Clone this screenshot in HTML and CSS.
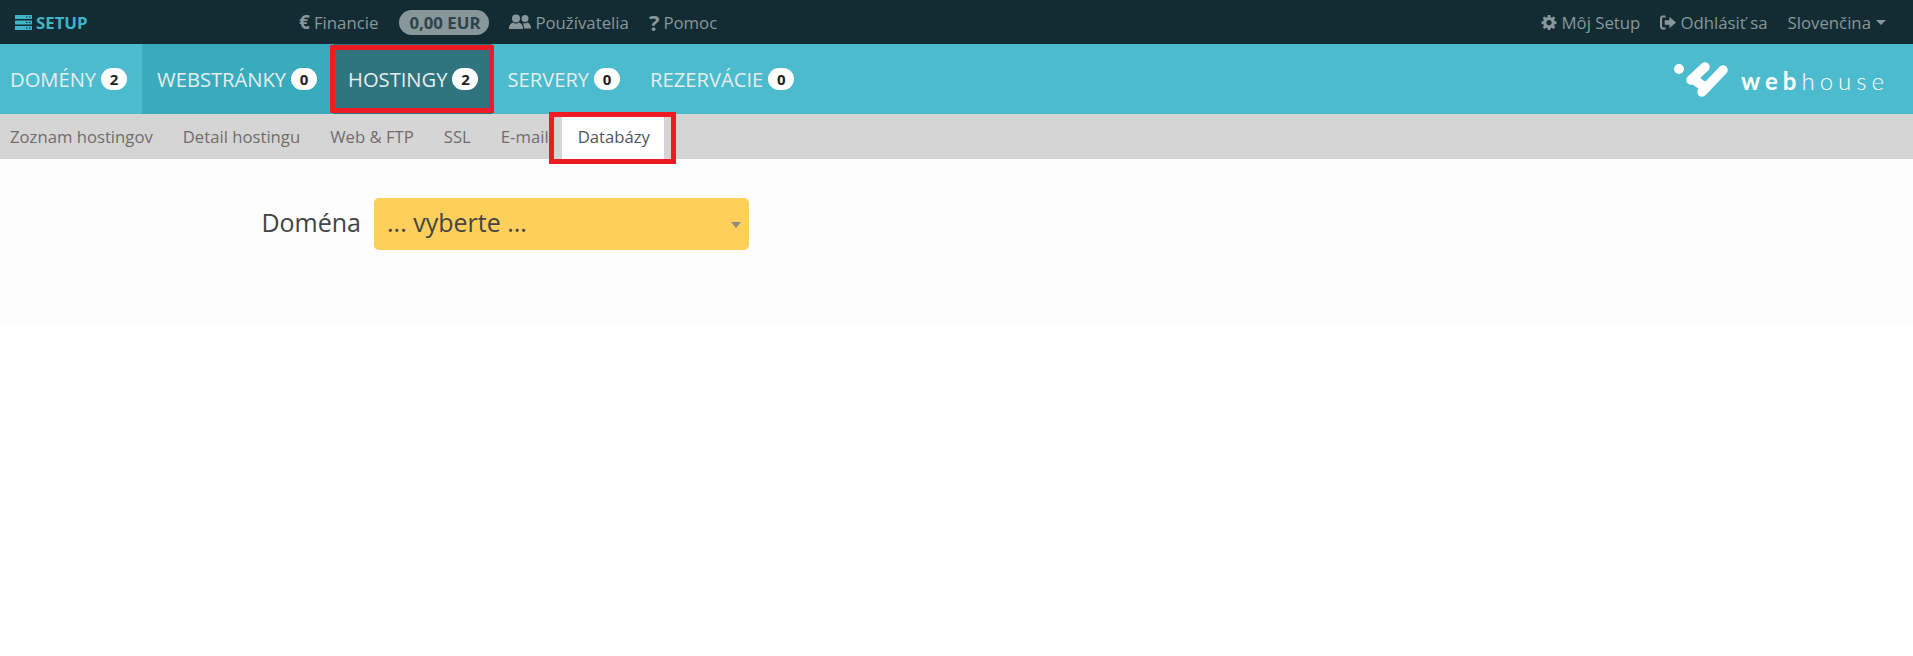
FILE: index.html
```html
<!DOCTYPE html>
<html lang="sk">
<head>
<meta charset="utf-8">
<title>Setup</title>
<link rel="stylesheet" href="styles.css">
</head>
<body>
<header class="topbar">
  <a class="brand">
    <svg class="brand-icon" viewBox="0 0 17 15"><path d="M0 0h17v4H0zM0 5.500h17v4H0zM0 11h17v4H0z" fill="#3fb4c8"/><path d="M11 1.500h1.500v1H11zM14 1.500h1.500v1H14zM11 7h1.500v1H11zM14 7h1.500v1H14zM11 12.500h1.500v1H11zM14 12.500h1.500v1H14z" fill="#132c33"/></svg>
    SETUP
  </a>
  <nav class="topnav">
    <a class="toplink"><span class="glyph">€</span> Financie</a>
    <span class="pill">0,00 EUR</span>
    <a class="toplink"><svg class="icon users" viewBox="0 0 22 16"><circle cx="7" cy="4.500" r="4"/><circle cx="16" cy="4.500" r="3.500"/><path d="M0 15c0-4 2-6 4-6.500 2 1.500 4 1.500 6 0 2 .5 4 2.500 4 6.500z"/><path d="M15 14.500h7c0-3.500-1.500-5.500-3.500-6-1.500 1-3 1-4.500.5 0 0 1 2.500 1 5.500z"/></svg> Používatelia</a>
    <a class="toplink"><span class="glyph big">?</span> Pomoc</a>
  </nav>
  <nav class="topnav right">
    <a class="toplink"><svg class="icon" viewBox="0 0 16 16"><path fill-rule="evenodd" d="M6.700 0h2.600l.4 2.200 1.300.6 1.900-1.300 1.800 1.800-1.300 1.900.6 1.300 2 .4v2.600l-2 .4-.6 1.300 1.300 1.900-1.800 1.800-1.900-1.300-1.300.6-.4 2.200H6.700l-.4-2.200-1.300-.6-1.900 1.300-1.800-1.800 1.300-1.900-.6-1.300-2-.4V6.900l2-.4.6-1.300L1.300 3.300l1.800-1.800L5 2.800l1.300-.6zM8 5.200a2.800 2.800 0 1 0 0 5.600 2.800 2.800 0 0 0 0-5.600z"/></svg> Môj Setup</a>
    <a class="toplink"><svg class="icon" viewBox="0 0 17 15"><path d="M6 0v2.200H3.500c-.8 0-1.300.5-1.300 1.300v8c0 .8.5 1.300 1.300 1.300H6V15H3C1.300 15 0 13.700 0 12V3c0-1.700 1.300-3 3-3z"/><path d="M10 1.500 17 7.500l-7 6V10H5V5h5z"/></svg> Odhlásiť sa</a>
    <a class="toplink lang">Slovenčina <span class="caret"></span></a>
  </nav>
</header>

<nav class="mainnav">
  <a class="tab first">DOMÉNY <span class="badge">2</span></a>
  <a class="tab hover">WEBSTRÁNKY <span class="badge">0</span></a>
  <a class="tab active">HOSTINGY <span class="badge">2</span></a>
  <a class="tab">SERVERY <span class="badge">0</span></a>
  <a class="tab">REZERVÁCIE <span class="badge">0</span></a>
  <div class="logo">
    <svg class="logo-mark" viewBox="0 0 56 42"><circle cx="6" cy="13" r="5" fill="#fff"/><g fill="none" stroke="#fff" stroke-width="9.500" stroke-linecap="round"><path d="M18 24 32 11"/><path d="M20 23 33 32"/><path d="M29 36 50 14"/></g></svg>
    <span class="logo-text"><b>web</b>house</span>
  </div>
</nav>

<nav class="subnav">
  <a class="subtab">Zoznam hostingov</a>
  <a class="subtab">Detail hostingu</a>
  <a class="subtab">Web &amp; FTP</a>
  <a class="subtab">SSL</a>
  <a class="subtab">E-mail</a>
  <a class="subtab current">Databázy</a>
</nav>

<main class="content">
  <form class="field">
    <label class="field-label">Doména</label>
    <div class="select">... vyberte ...<span class="select-caret"></span></div>
  </form>
</main>

<div class="mark mark-hosting"></div>
<div class="mark mark-db"></div>
</body>
</html>
```

FILE: styles.css
```css
* { box-sizing: border-box; }
html, body { margin: 0; padding: 0; }
body {
  background: #fff;
  font-family: "Open Sans", sans-serif;
  color: #444;
  position: relative;
}
a { display: inline-flex; align-items: center; }

.topbar {
  height: 44px;
  background: #132c33;
  display: flex;
  align-items: center;
  padding: 0 27px 0 15px;
  font-size: 16.800px;
  color: #889799;
}
.brand {
  width: 284px;
  font-weight: 700;
  font-size: 16.800px;
  color: #3fb4c8;
  gap: 4px;
}
.brand-icon { width: 17px; height: 15px; }
.topnav { display: flex; align-items: center; gap: 20px; }
.topnav.right { margin-left: auto; }
.toplink { gap: 4px; white-space: nowrap; }
.glyph { font-weight: 700; font-size: 19px; line-height: 1; }
.glyph.big { font-size: 22px; }
.icon { width: 16px; height: 15px; fill: #889799; }
.icon.users { width: 22px; height: 16px; }
.pill {
  background: #889799;
  color: #2f444a;
  font-weight: 700;
  border-radius: 13px;
  height: 25px;
  line-height: 25px;
  padding: 0 10px;
  width: 90px;
  margin-left: 1px;
  white-space: nowrap;
}
.caret {
  width: 0; height: 0;
  border-left: 5px solid transparent;
  border-right: 5px solid transparent;
  border-top: 5px solid #889799;
  margin-left: 1px;
}

.mainnav {
  height: 70px;
  background: #4bbbcd;
  display: flex;
  align-items: stretch;
  padding-right: 24px;
}
.tab {
  padding: 0 15px;
  font-size: 20.160px;
  color: #e6eeee;
  gap: 5px;
  white-space: nowrap;
}
.tab.first { padding-left: 10px; }
.tab.hover { background: #3aabbd; }
.tab.active { background: #2f747f; margin-left: 1px; padding-right: 14px; }
.badge {
  background: #fff;
  color: #222;
  font-size: 15px;
  font-weight: 700;
  width: 26px;
  height: 22px;
  line-height: 22px;
  text-align: center;
  border-radius: 11px;
}
.logo {
  margin-left: auto;
  display: flex;
  align-items: center;
  gap: 12px;
}
.logo-mark { width: 56px; height: 42px; margin-bottom: 4px; }
.logo-text {
  font-family: "Lato", sans-serif;
  font-weight: 300;
  font-size: 24px;
  letter-spacing: 5px;
  color: #fff;
  margin-top: 2px;
}
.logo-text b { font-weight: 700; }

.subnav {
  height: 45px;
  background: #d5d5d5;
  display: flex;
  align-items: stretch;
  padding-left: 10px;
  font-size: 16.700px;
  color: #726c6c;
}
.subtab { margin-right: 30px; white-space: nowrap; }
.subtab.current {
  background: #fff;
  color: #4e5566;
  margin-left: -17px;
  padding: 0 15px 0 16px;
  width: 102px;
}

.content {
  height: 167px;
  background: #fdfdfd;
  padding-top: 39px;
}
.field { display: flex; align-items: center; height: 52px; margin: 0; }
.field-label {
  width: 361px;
  text-align: right;
  font-size: 25px;
  position: relative;
  top: -2px;
}
.select {
  margin-left: 13px;
  width: 375px;
  height: 52px;
  line-height: 48px;
  background: #ffcf5c;
  border-radius: 5px;
  padding-left: 13px;
  font-size: 25px;
  position: relative;
}
.select-caret {
  position: absolute;
  right: 8px;
  top: 24px;
  border-left: 5px solid transparent;
  border-right: 5px solid transparent;
  border-top: 6px solid #8d8a80;
}

.mark {
  position: absolute;
  border: 5px solid #ed1c24;
}
.mark-hosting { left: 330px; top: 45px; width: 164px; height: 68px; }
.mark-db { left: 549px; top: 112px; width: 127px; height: 52px; }
```
